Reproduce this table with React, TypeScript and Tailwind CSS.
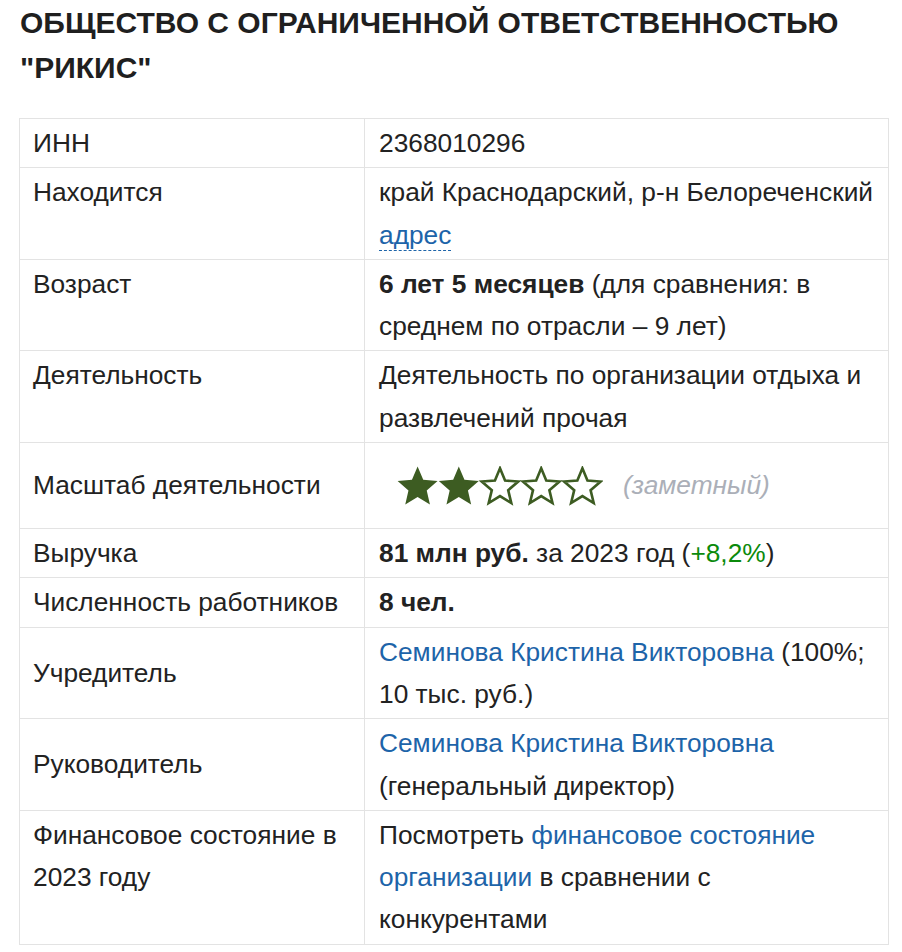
import React from "react";

const Stars: React.FC<{ filled: number; total: number }> = ({ filled, total }) => {
  const pts = (cx: number, cy: number, R: number, r: number) => {
    const out: string[] = [];
    for (let i = 0; i < 10; i++) {
      const a = ((-90 + 36 * i) * Math.PI) / 180;
      const rad = i % 2 === 0 ? R : r;
      out.push(`${(cx + rad * Math.cos(a)).toFixed(2)},${(cy + rad * Math.sin(a)).toFixed(2)}`);
    }
    return out.join(" ");
  };
  return (
    <svg width={total * 41.2} height="40" viewBox={`0 0 ${total * 41.2} 40`}>
      {Array.from({ length: total }).map((_, i) =>
        i < filled ? (
          <polygon key={i} points={pts(20.6 + i * 41.2, 21.5, 21, 9.6)} fill="#3d5c22" />
        ) : (
          <polygon
            key={i}
            points={pts(20.6 + i * 41.2, 21.5, 19.2, 8.6)}
            fill="#fff"
            stroke="#3d5c22"
            strokeWidth="2.6"
            strokeLinejoin="miter"
          />
        )
      )}
    </svg>
  );
};

type Row = { label: React.ReactNode; value: React.ReactNode; middle?: boolean };

const link = "text-[#1d64a9]";

const rows: Row[] = [
  { label: "ИНН", value: "2368010296" },
  {
    label: "Находится",
    value: (
      <>
        край Краснодарский, р-н Белореченский{" "}
        <span className={`${link} border-b border-dashed border-[#1d64a9] leading-none`}>адрес</span>
      </>
    ),
  },
  {
    label: "Возраст",
    value: (
      <>
        <b>6 лет 5 месяцев</b> (для сравнения: в среднем по отрасли – 9 лет)
      </>
    ),
  },
  { label: "Деятельность", value: "Деятельность по организации отдыха и развлечений прочая" },
  {
    label: "Масштаб деятельности",
    middle: true,
    value: (
      <div className="flex items-center h-[79px] pl-[18px] gap-[20px]">
        <Stars filled={2} total={5} />
        <span className="italic text-[#abafb8]">(заметный)</span>
      </div>
    ),
  },
  {
    label: "Выручка",
    value: (
      <>
        <b>81 млн руб.</b> за 2023 год (<span className="text-[#0b8a0b]">+8,2%</span>)
      </>
    ),
  },
  { label: "Численность работников", value: <b>8 чел.</b> },
  {
    label: "Учредитель",
    middle: true,
    value: (
      <>
        <span className={link}>Семинова Кристина Викторовна</span> (100%; 10 тыс. руб.)
      </>
    ),
  },
  {
    label: "Руководитель",
    middle: true,
    value: (
      <>
        <span className={link}>Семинова Кристина Викторовна</span> (генеральный директор)
      </>
    ),
  },
  {
    label: "Финансовое состояние в 2023 году",
    value: (
      <>
        Посмотреть <span className={link}>финансовое состояние организации</span> в сравнении с
        конкурентами
      </>
    ),
  },
];

export default function App() {
  return (
    <div
      className="bg-white min-h-screen pl-[19px] text-[#222222]"
      style={{ fontFamily: '"Liberation Sans", Arial, sans-serif' }}
    >
      <h1 className="pl-[1px] text-[30px] leading-[45px] font-bold text-[#1f1f1f] m-0">
        ОБЩЕСТВО С ОГРАНИЧЕННОЙ ОТВЕТСТВЕННОСТЬЮ "РИКИС"
      </h1>
      <table className="mt-[28px] w-[870px] border-collapse text-[26.3px] leading-[42.3px]">
        <tbody>
          {rows.map((r, i) => (
            <tr key={i}>
              <td
                className={`w-[345px] border border-[#e3e3e3] px-[13px] py-[3px] ${
                  r.middle ? "align-middle" : "align-top"
                }`}
              >
                {r.label}
              </td>
              <td className="border border-[#e3e3e3] px-[14px] py-[3px] align-top">{r.value}</td>
            </tr>
          ))}
        </tbody>
      </table>
    </div>
  );
}
